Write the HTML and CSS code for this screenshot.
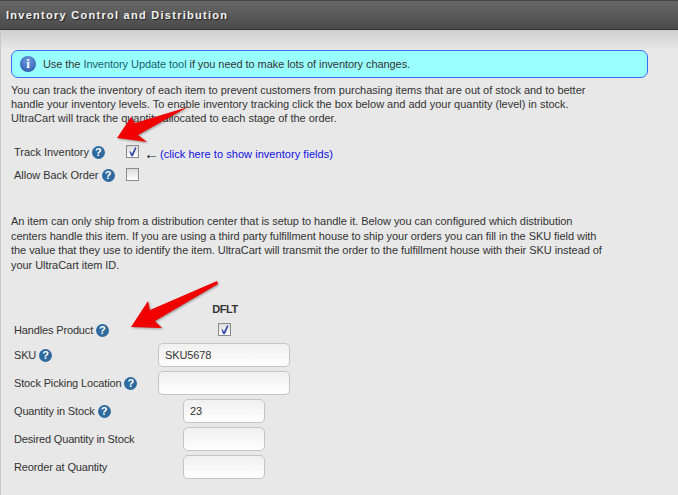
FILE: index.html
```html
<!DOCTYPE html>
<html lang="en">
<head>
<meta charset="utf-8">
<title>Inventory Control and Distribution</title>
<link rel="stylesheet" href="styles.css">
</head>
<body>
<div class="panel">
  <h1 class="title">Inventory Control and Distribution</h1>
  <div class="content">
    <div class="notice">
      <span class="info-icon">i</span>
      <span>Use the <a class="tool-link">Inventory Update tool</a> if you need to make lots of inventory changes.</span>
    </div>
    <p class="para intro">You can track the inventory of each item to prevent customers from purchasing items that are out of stock and to better<br>handle your inventory levels. To enable inventory tracking click the box below and add your quantity (level) in stock.<br>UltraCart will track the quantity allocated to each stage of the order.</p>

    <div class="check-rows">
      <div class="check-row">
        <span class="check-label">Track Inventory <span class="help">?</span></span>
        <span class="box"><svg viewBox="0 0 13 13" width="13" height="13"><path d="M4 6.5 L6 9.5 L9.5 2.5 L10 3 L6.5 11 L5.5 11 Z" fill="#3a4fa8" stroke="#3a4fa8" stroke-width="1"/></svg></span>
        <span class="hint"><span class="hint-arrow">&#8592;</span><a class="show-link">(click here to show inventory fields)</a></span>
      </div>
      <div class="check-row">
        <span class="check-label">Allow Back Order <span class="help">?</span></span>
        <span class="box"></span>
      </div>
    </div>

    <p class="para dist">An item can only ship from a distribution center that is setup to handle it. Below you can configured which distribution<br>centers handle this item. If you are using a third party fulfillment house to ship your orders you can fill in the SKU field with<br>the value that they use to identify the item. UltraCart will transmit the order to the fulfillment house with their SKU instead of<br>your UltraCart item ID.</p>

    <div class="form">
      <div class="dflt-head">DFLT</div>
      <div class="form-row short">
        <span class="form-label">Handles Product <span class="help">?</span></span>
        <span class="form-check"><span class="box"><svg viewBox="0 0 13 13" width="13" height="13"><path d="M4 6.5 L6 9.5 L9.5 2.5 L10 3 L6.5 11 L5.5 11 Z" fill="#3a4fa8" stroke="#3a4fa8" stroke-width="1"/></svg></span></span>
      </div>
      <div class="form-row">
        <span class="form-label">SKU <span class="help">?</span></span>
        <input class="field wide" type="text" value="SKU5678">
      </div>
      <div class="form-row">
        <span class="form-label">Stock Picking Location <span class="help">?</span></span>
        <input class="field wide" type="text">
      </div>
      <div class="form-row">
        <span class="form-label">Quantity in Stock <span class="help">?</span></span>
        <input class="field narrow" type="text" value="23">
      </div>
      <div class="form-row">
        <span class="form-label">Desired Quantity in Stock</span>
        <input class="field narrow" type="text">
      </div>
      <div class="form-row">
        <span class="form-label">Reorder at Quantity</span>
        <input class="field narrow" type="text">
      </div>
    </div>
  </div>
  <svg class="arrows" width="678" height="495" viewBox="0 0 678 495">
    <path d="M117 138 L131 117 L135 123 L188 107 L138 135 L147 142 Z" fill="#f00000"/>
    <path d="M131 327 L148 301 L150 310 L217 281 L218 284 L155 321 L162 328 Z" fill="#f00000"/>
  </svg>
</div>
</body>
</html>
```
FILE: styles.css
```css
* { box-sizing: border-box; }
html, body { margin: 0; padding: 0; }
body {
  width: 678px;
  height: 495px;
  overflow: hidden;
  background: #e8e8e8;
  font-family: "Liberation Sans", Arial, sans-serif;
  font-size: 11px;
  color: #333;
}
.panel { position: relative; height: 495px; border-left: 1px solid #c8c8c8; }
.title {
  margin: 0 0 0 -1px;
  height: 30px;
  padding: 8px 0 0 6px;
  font-size: 11px;
  line-height: 13px;
  font-weight: bold;
  letter-spacing: 1.27px;
  color: #f2f2f2;
  text-shadow: 1px 1px 1px #222;
  background: linear-gradient(#686868, #4a4a4a);
  border-top: 1px solid #444;
  border-bottom: 1px solid #333;
}
.content {
  height: 465px;
  padding: 20px 30px 0 10px;
  background: linear-gradient(#cfcfcf, #e8e8e8 20px);
}
.notice {
  display: flex;
  align-items: center;
  gap: 7px;
  height: 28px;
  padding-left: 8px;
  background: #99ffff;
  border: 1px solid #3a6cf0;
  border-radius: 7px;
  letter-spacing: -0.07px;
}
.info-icon {
  width: 16px;
  height: 16px;
  border-radius: 50%;
  background: radial-gradient(circle at 50% 30%, #6f9be0, #2450a8);
  color: #fff;
  font-family: "Liberation Serif", serif;
  font-weight: bold;
  font-size: 13px;
  line-height: 16px;
  text-align: center;
}
.tool-link { color: #17606e; }
.para { margin: 0; }
.intro { margin-top: 5px; line-height: 14px; letter-spacing: -0.02px; }
.check-rows { margin-top: 17px; }
.check-row { display: flex; align-items: center; height: 23px; }
.check-label { width: 115px; padding-left: 3px; margin-bottom: 2px; letter-spacing: -0.03px; }
.help {
  display: inline-block;
  width: 13px;
  height: 13px;
  margin-left: 0;
  border-radius: 50%;
  background: #2f6a9e;
  color: #fff;
  font-weight: bold;
  font-size: 11px;
  line-height: 13px;
  text-align: center;
  vertical-align: 0;
  letter-spacing: 0;
}
.box {
  display: block;
  width: 13px;
  height: 13px;
  border: 1px solid #8a8a8a;
  background: linear-gradient(#dcdcdc, #fff);
  overflow: hidden;
  flex: none;
}
.check-row .box { margin-bottom: 4px; }
.box svg { display: block; margin: -1px; }
.hint { margin-left: 5px; color: #111; display: flex; align-items: center; }
.hint-arrow { width: 16px; font-size: 15px; line-height: 14px; }
.show-link { color: #1010e0; letter-spacing: 0.05px; }
.dist { margin-top: 26px; line-height: 14.5px; letter-spacing: -0.05px; }
.form { margin-top: 30px; }
.dflt-head {
  width: 132px;
  margin-left: 148px;
  height: 17px;
  line-height: 14px;
  font-size: 11px;
  font-weight: bold;
  letter-spacing: -0.4px;
  text-align: center;
  color: #333;
}
.form-row { display: flex; align-items: center; height: 28px; }
.form-row.short { height: 20px; margin-bottom: 2px; }
.form-label { width: 147px; flex: none; padding-left: 3px; letter-spacing: -0.15px; }
.form-row.short .form-label { padding-top: 2px; }
.form-check { width: 132px; display: flex; justify-content: center; }
.field {
  height: 24px;
  padding: 0 6px;
  border: 1px solid #c4c4c4;
  border-radius: 5px;
  background: linear-gradient(#f0f0f0, #fff);
  font-family: "Liberation Sans", Arial, sans-serif;
  font-size: 11px;
  letter-spacing: -0.1px;
  color: #333;
}
.field.wide { width: 132px; }
.field.narrow { width: 82px; margin-left: 25px; }
.arrows { position: absolute; left: -1px; top: 0; pointer-events: none; filter: drop-shadow(1px 1px 1px rgba(0,0,0,.35)); }
```
